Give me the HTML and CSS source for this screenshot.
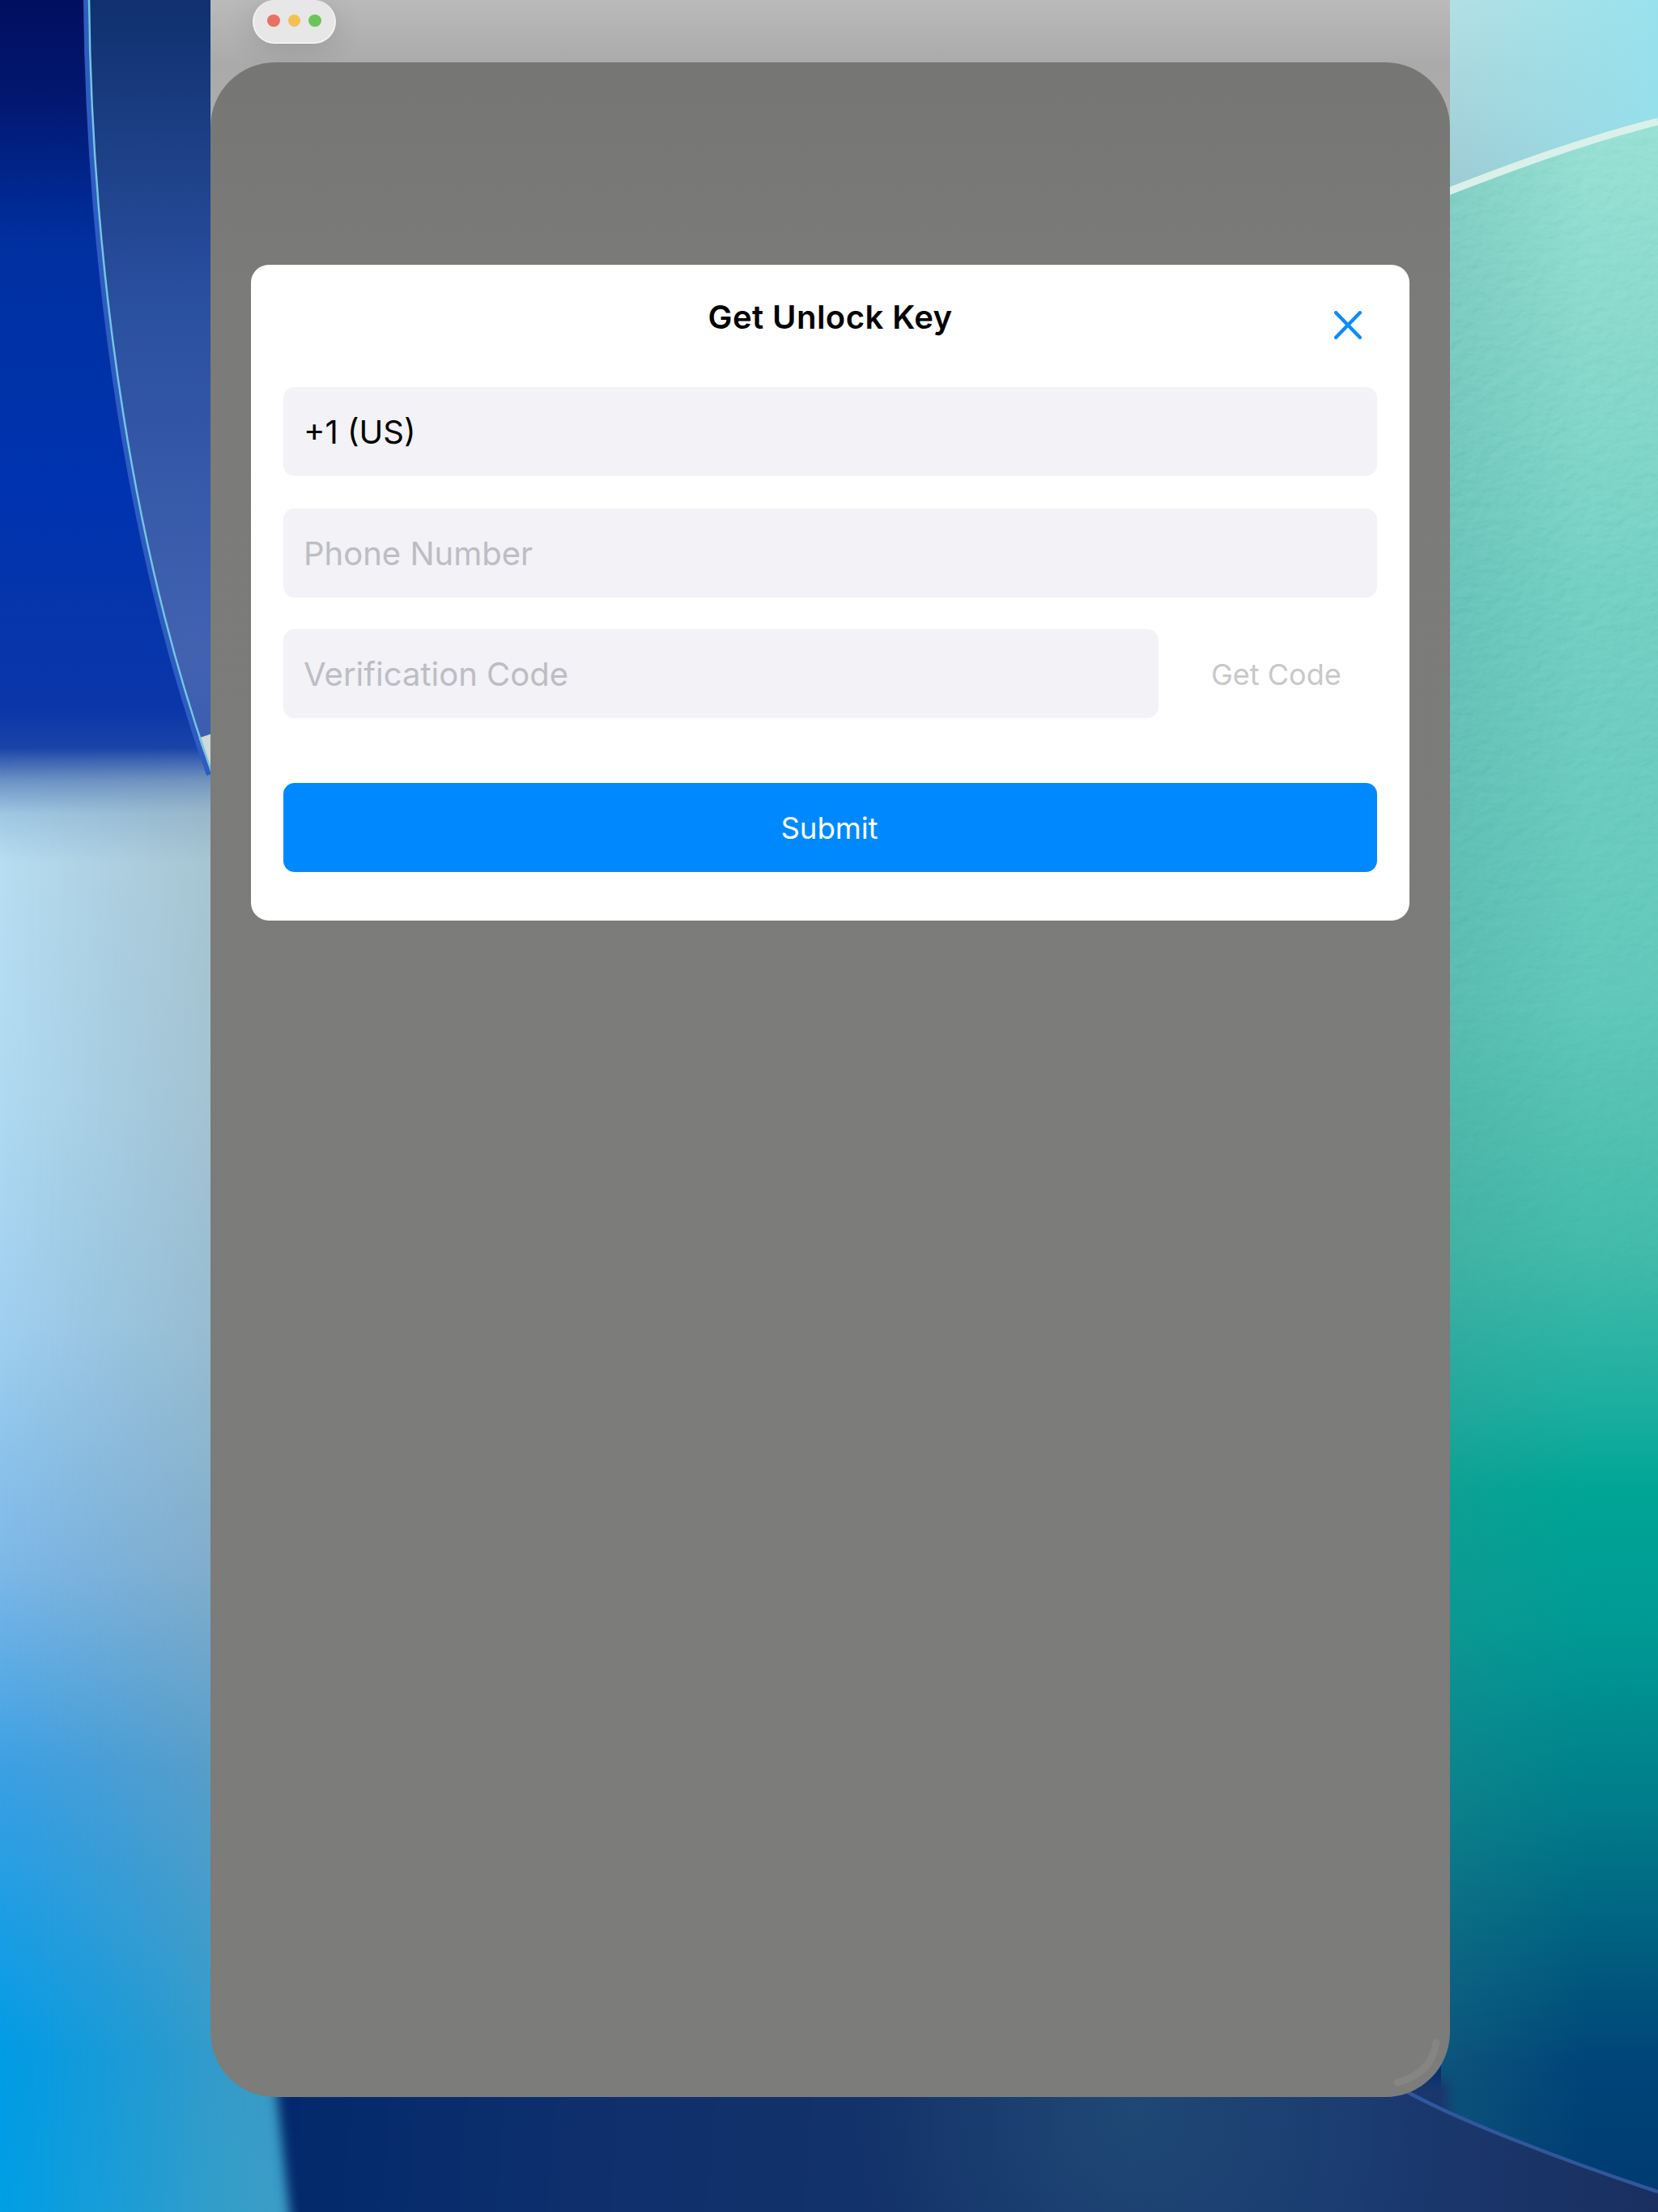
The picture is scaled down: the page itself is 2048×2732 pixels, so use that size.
FILE: index.html
```html
<!DOCTYPE html>
<html lang="en">
<head>
<meta charset="utf-8">
<title>Get Unlock Key</title>
<link rel="stylesheet" href="styles.css">
</head>
<body>
<svg class="wallpaper" viewBox="0 0 2048 2732" aria-hidden="true">
  <defs>
    <linearGradient id="leftV" gradientUnits="userSpaceOnUse" x1="0" y1="0" x2="0" y2="2732">
      <stop offset="0" stop-color="#020f60"/>
      <stop offset=".04" stop-color="#02166e"/>
      <stop offset=".11" stop-color="#0030a0"/>
      <stop offset=".22" stop-color="#0033b0"/>
      <stop offset=".32" stop-color="#0a36a8"/>
      <stop offset=".338" stop-color="#1a43a8"/>
      <stop offset=".353" stop-color="#6d93c6"/>
      <stop offset=".368" stop-color="#a0c8e4"/>
      <stop offset=".39" stop-color="#b8def2"/>
      <stop offset=".5" stop-color="#b0daf2"/>
      <stop offset=".6" stop-color="#a0d0f0"/>
      <stop offset=".71" stop-color="#7cb8e8"/>
      <stop offset=".8" stop-color="#3ba0e4"/>
      <stop offset=".93" stop-color="#009ce6"/>
      <stop offset="1" stop-color="#009fe6"/>
    </linearGradient>
    <linearGradient id="leftH" gradientUnits="userSpaceOnUse" x1="0" y1="0" x2="340" y2="0">
      <stop offset="0" stop-color="#78909a" stop-opacity="0"/>
      <stop offset=".76" stop-color="#8a9a9a" stop-opacity=".36"/>
      <stop offset="1" stop-color="#8a9a9a" stop-opacity=".42"/>
    </linearGradient>
    <linearGradient id="leftFade" gradientUnits="userSpaceOnUse" x1="0" y1="925" x2="0" y2="1010">
      <stop offset="0" stop-color="#000"/>
      <stop offset="1" stop-color="#fff"/>
    </linearGradient>
    <mask id="leftMask" maskUnits="userSpaceOnUse" x="0" y="900" width="370" height="1832">
      <rect x="0" y="900" width="370" height="1832" fill="url(#leftFade)"/>
    </mask>
    <linearGradient id="glass" gradientUnits="userSpaceOnUse" x1="0" y1="0" x2="0" y2="950">
      <stop offset="0" stop-color="#10306e"/>
      <stop offset=".4" stop-color="#2a50a0"/>
      <stop offset=".85" stop-color="#4262b0"/>
      <stop offset="1" stop-color="#3a5cae"/>
    </linearGradient>
    <linearGradient id="skyV" gradientUnits="userSpaceOnUse" x1="0" y1="0" x2="0" y2="240">
      <stop offset="0" stop-color="#b2e0e4"/>
      <stop offset="1" stop-color="#9ccbd4"/>
    </linearGradient>
    <linearGradient id="skyH" gradientUnits="userSpaceOnUse" x1="1790" y1="0" x2="2048" y2="0">
      <stop offset="0" stop-color="#94e2ee" stop-opacity="0"/>
      <stop offset="1" stop-color="#94e2ee" stop-opacity=".85"/>
    </linearGradient>
    <linearGradient id="tealV" gradientUnits="userSpaceOnUse" x1="0" y1="150" x2="0" y2="2732">
      <stop offset="0" stop-color="#97dfd3"/>
      <stop offset=".12" stop-color="#84d7ca"/>
      <stop offset=".24" stop-color="#70cec1"/>
      <stop offset=".42" stop-color="#60c7b9"/>
      <stop offset=".54" stop-color="#42baaa"/>
      <stop offset=".615" stop-color="#1bae9f"/>
      <stop offset=".655" stop-color="#00a596"/>
      <stop offset=".72" stop-color="#009a94"/>
      <stop offset=".81" stop-color="#007b8a"/>
      <stop offset=".87" stop-color="#006080"/>
      <stop offset=".93" stop-color="#004478"/>
      <stop offset="1" stop-color="#003a70"/>
    </linearGradient>
    <linearGradient id="tealShade" gradientUnits="userSpaceOnUse" x1="1790" y1="0" x2="1960" y2="0">
      <stop offset="0" stop-color="#3a8f8c" stop-opacity=".2"/>
      <stop offset="1" stop-color="#3a8f8c" stop-opacity="0"/>
    </linearGradient>
    <linearGradient id="navyH" gradientUnits="userSpaceOnUse" x1="340" y1="2600" x2="2048" y2="2732">
      <stop offset="0" stop-color="#02296c"/>
      <stop offset=".22" stop-color="#0e2f6c"/>
      <stop offset=".5" stop-color="#14336a"/>
      <stop offset=".78" stop-color="#1a3a70"/>
      <stop offset="1" stop-color="#1a2f60"/>
    </linearGradient>
    <radialGradient id="navyGlow" gradientUnits="userSpaceOnUse" cx="1400" cy="2610" r="340">
      <stop offset="0" stop-color="#235078" stop-opacity=".7"/>
      <stop offset="1" stop-color="#235078" stop-opacity="0"/>
    </radialGradient>
    <filter id="soft" x="-5%" y="-20%" width="110%" height="140%" color-interpolation-filters="sRGB">
      <feGaussianBlur stdDeviation="7"/>
    </filter>
    <filter id="grain" x="0" y="0" width="100%" height="100%" color-interpolation-filters="sRGB">
      <feTurbulence type="fractalNoise" baseFrequency="0.06 0.085" numOctaves="3" seed="4"/>
      <feDiffuseLighting surfaceScale="1.5" lighting-color="#ffffff" diffuseConstant="1">
        <feDistantLight azimuth="235" elevation="36"/>
      </feDiffuseLighting>
    </filter>
    <linearGradient id="grainFade" gradientUnits="userSpaceOnUse" x1="0" y1="700" x2="0" y2="1850">
      <stop offset="0" stop-color="#fff"/>
      <stop offset="1" stop-color="#000"/>
    </linearGradient>
    <mask id="grainMask" maskUnits="userSpaceOnUse" x="1780" y="150" width="268" height="1700">
      <rect x="1780" y="150" width="268" height="1700" fill="url(#grainFade)"/>
    </mask>
    <clipPath id="tealClip"><path d="M1780 240 C1870 205 1960 172 2048 150 V2707 C1930 2668 1800 2618 1737 2583 H1780 Z"/></clipPath>
  </defs>

  <rect width="370" height="2732" fill="url(#leftV)"/>
  <rect y="900" width="370" height="1832" fill="url(#leftH)" mask="url(#leftMask)"/>

  <path d="M110 0 C112 200 135 600 262 955 V0 Z" fill="url(#glass)"/>
  <path d="M244 912 L262 906 V952 Z" fill="#d0d8d8"/>
  <path d="M106 0 C108 200 131 600 258 957" fill="none" stroke="#2f5cc0" stroke-width="6"/>
  <path d="M110 0 C112 200 135 600 262 955" fill="none" stroke="#74c6e2" stroke-width="2.5"/>

  <rect x="1780" y="0" width="268" height="260" fill="url(#skyV)"/>
  <rect x="1780" y="0" width="268" height="260" fill="url(#skyH)"/>
  <rect x="1780" y="150" width="268" height="2582" fill="url(#tealV)" clip-path="url(#tealClip)"/>
  <rect x="1780" y="150" width="268" height="2582" fill="url(#tealShade)" clip-path="url(#tealClip)"/>
  <g clip-path="url(#tealClip)" mask="url(#grainMask)" opacity=".28" class="grain-blend">
    <rect x="1780" y="150" width="268" height="1700" filter="url(#grain)"/>
  </g>
  <path d="M1780 240 C1870 205 1960 172 2048 150" fill="none" stroke="#d9f1ea" stroke-width="9"/>

  <path d="M340 2570 H1790 V2790 H364 Z" fill="url(#navyH)" filter="url(#soft)"/>
  <path d="M1700 2570 L1737 2583 C1800 2618 1930 2668 2048 2707 V2790 H1700 Z" fill="url(#navyH)"/>
  <rect x="1000" y="2570" width="800" height="162" fill="url(#navyGlow)"/>
  <path d="M1737 2583 C1800 2618 1930 2668 2048 2707" fill="none" stroke="#30589c" stroke-width="4.5"/>
</svg>

<main class="desktop">
  <section class="window">
    <div class="traffic">
      <span class="dot dot-red"></span>
      <span class="dot dot-yellow"></span>
      <span class="dot dot-green"></span>
    </div>
    <div class="panel">
      <div class="dialog">
        <header class="dialog-head">
          <span></span>
          <h1 class="dialog-title">Get Unlock Key</h1>
          <button class="close" type="button" aria-label="Close">
            <svg class="close-icon" viewBox="0 0 34 35"><path d="M2.2 2.2 L31.8 32.8 M31.8 2.2 L2.2 32.8"/></svg>
          </button>
        </header>
        <div class="field field-value">+1 (US)</div>
        <div class="field field-empty field-phone">Phone Number</div>
        <div class="code-row">
          <div class="field field-empty field-code">Verification Code</div>
          <div class="get-code">Get Code</div>
        </div>
        <button class="submit" type="button">Submit</button>
      </div>
      <svg class="corner-glint" viewBox="0 0 60 60" aria-hidden="true"><path d="M54 5 C50 30 34 47 6 54"/></svg>
    </div>
  </section>
</main>
</body>
</html>
```
FILE: styles.css
```css
* { box-sizing: border-box; }

html, body {
  margin: 0;
  padding: 0;
}

body {
  position: relative;
  width: 2048px;
  height: 2732px;
  overflow: hidden;
  background: #0a3070;
  font-family: Inter, "Liberation Sans", sans-serif;
  color: #000;
}

.wallpaper {
  position: absolute;
  inset: 0;
  width: 2048px;
  height: 2732px;
  display: block;
}

.grain-blend { mix-blend-mode: soft-light; }

.desktop {
  position: relative;
  padding-left: 260px;
}

.window {
  position: relative;
  width: 1531px;
  height: 2590px;
  padding-top: 77px;
  background:
    linear-gradient(180deg, #bababa 0, #a9aaa9 80px, #adadad 170px) top / 100% 170px no-repeat;
}

.traffic {
  position: absolute;
  top: 0;
  left: 52px;
  width: 103px;
  height: 54px;
  display: flex;
  align-items: center;
  justify-content: center;
  gap: 10px;
  padding-bottom: 1px;
  background: #e6e7e6;
  border: 2px solid #f2f2f2;
  border-top: 0;
  border-radius: 27px;
  box-shadow: 0 6px 36px rgba(0, 0, 0, 0.12);
}

.dot {
  width: 15.5px;
  height: 15.5px;
  border-radius: 50%;
}
.dot-red { background: #e87161; }
.dot-yellow { background: #f2c152; }
.dot-green { background: #6bc559; }

.panel {
  position: relative;
  height: 2513px;
  padding: 250px 50px 0;
  background: linear-gradient(180deg, #767675 0%, #7b7b79 12%, #7c7c7a 100%);
  border-radius: 80px;
}

.corner-glint {
  position: absolute;
  right: 11px;
  bottom: 12px;
  width: 60px;
  height: 60px;
}
.corner-glint path {
  fill: none;
  stroke: #858583;
  stroke-width: 9;
  stroke-linecap: round;
}

.dialog {
  width: 1431px;
  height: 810px;
  padding: 0 40px;
  background: #fff;
  border-radius: 22px;
}

.dialog-head {
  display: grid;
  grid-template-columns: 1fr auto 1fr;
  height: 151px;
}

.dialog-title {
  margin: 0;
  padding-top: 39px;
  font-size: 40px;
  line-height: 52px;
  font-weight: 600;
  letter-spacing: 0.45px;
  color: #000;
}

.close {
  justify-self: end;
  align-self: start;
  margin: 57px 19px 0 0;
  padding: 0;
  border: 0;
  background: none;
  display: block;
  width: 34px;
  height: 35px;
}

.close-icon {
  display: block;
  width: 34px;
  height: 35px;
}
.close-icon path {
  fill: none;
  stroke: #0a8cfd;
  stroke-width: 4.4;
  stroke-linecap: round;
}

.field {
  height: 110px;
  margin-bottom: 40px;
  padding-left: 25px;
  display: flex;
  align-items: center;
  font-size: 40px;
  background: #f2f2f7;
  border-radius: 14px;
}
.field-value { color: #000; }
.field-empty { color: #bdbdc3; }
.field-phone { margin-bottom: 39px; }

.code-row {
  display: flex;
  align-items: center;
  height: 110px;
  margin-bottom: 80px;
}

.field-code {
  flex: none;
  width: 1081px;
  margin-bottom: 0;
}

.get-code {
  flex: none;
  margin-left: 65px;
  padding-top: 1px;
  font-size: 36px;
  color: #c8c8c8;
}

.submit {
  display: block;
  width: 100%;
  height: 110px;
  padding: 1px 2px 0 0;
  border: 0;
  border-radius: 14px;
  background: #0089ff;
  color: #fff;
  font-family: inherit;
  font-size: 36.5px;
}
```
